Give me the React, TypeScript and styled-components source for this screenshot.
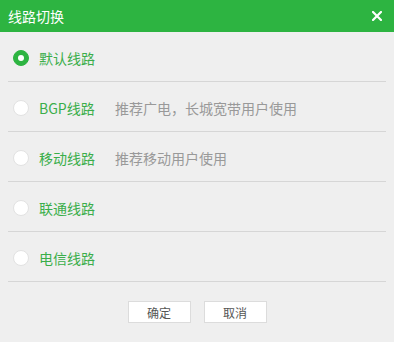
import React, { useState } from 'react';
import styled, { createGlobalStyle } from 'styled-components';

const GlobalStyle = createGlobalStyle`
  html, body {
    margin: 0;
    padding: 0;
    background: #efefef;
    font-family: "Noto Sans CJK SC", "Noto Sans", sans-serif;
  }
`;

const Dialog = styled.div`
  width: 394px;
  height: 342px;
  background: #efefef;
  display: flex;
  flex-direction: column;
`;

const Header = styled.div`
  height: 32px;
  background: #2db441;
  display: flex;
  align-items: center;
  justify-content: space-between;
  padding: 0 11px 0 8px;
`;

const Title = styled.div`
  color: #ffffff;
  font-size: 14px;
  line-height: 1;
`;

const CloseButton = styled.button`
  border: none;
  background: none;
  padding: 0;
  width: 12px;
  height: 12px;
  display: flex;
  align-items: center;
  justify-content: center;
  cursor: pointer;
`;

const List = styled.div`
  padding: 0 8px;
  display: flex;
  flex-direction: column;
`;

const Row = styled.label`
  height: 46px;
  padding-top: 3px;
  border-bottom: 1px solid #d6d6d6;
  display: flex;
  align-items: center;
  cursor: pointer;
`;

const Radio = styled.span<{ $checked: boolean }>`
  width: 16px;
  height: 16px;
  border-radius: 50%;
  box-sizing: border-box;
  margin-left: 5px;
  margin-right: 10px;
  background: ${(p) => (p.$checked ? '#2db441' : '#ffffff')};
  border: 1px solid ${(p) => (p.$checked ? '#2db441' : '#e2e2e2')};
  display: flex;
  align-items: center;
  justify-content: center;

  &::after {
    content: '';
    display: ${(p) => (p.$checked ? 'block' : 'none')};
    width: 6px;
    height: 6px;
    border-radius: 50%;
    background: #ffffff;
  }
`;

const Label = styled.span`
  color: #3aae4a;
  font-size: 14px;
  width: 76px;
`;

const Desc = styled.span`
  color: #999999;
  font-size: 14px;
`;

const Footer = styled.div`
  display: flex;
  justify-content: center;
  gap: 13px;
  padding-top: 19px;
`;

const Button = styled.button`
  width: 63px;
  height: 22px;
  background: #ffffff;
  border: 1px solid #dcdcdc;
  color: #555555;
  font-family: "Noto Sans CJK SC", sans-serif;
  font-size: 12px;
  padding: 0;
  cursor: pointer;
`;

const lines = [
  { name: '默认线路', desc: '' },
  { name: 'BGP线路', desc: '推荐广电，长城宽带用户使用' },
  { name: '移动线路', desc: '推荐移动用户使用' },
  { name: '联通线路', desc: '' },
  { name: '电信线路', desc: '' },
];

export default function App() {
  const [selected, setSelected] = useState(0);
  return (
    <Dialog>
      <GlobalStyle />
      <Header>
        <Title>线路切换</Title>
        <CloseButton aria-label="关闭">
          <svg width="10" height="10" viewBox="0 0 10 10">
            <path d="M1 1L9 9M9 1L1 9" stroke="#ffffff" strokeWidth="2.2" strokeLinecap="square" />
          </svg>
        </CloseButton>
      </Header>
      <List>
        {lines.map((l, i) => (
          <Row key={l.name} onClick={() => setSelected(i)}>
            <Radio $checked={selected === i} />
            <Label>{l.name}</Label>
            {l.desc && <Desc>{l.desc}</Desc>}
          </Row>
        ))}
      </List>
      <Footer>
        <Button>确定</Button>
        <Button>取消</Button>
      </Footer>
    </Dialog>
  );
}
